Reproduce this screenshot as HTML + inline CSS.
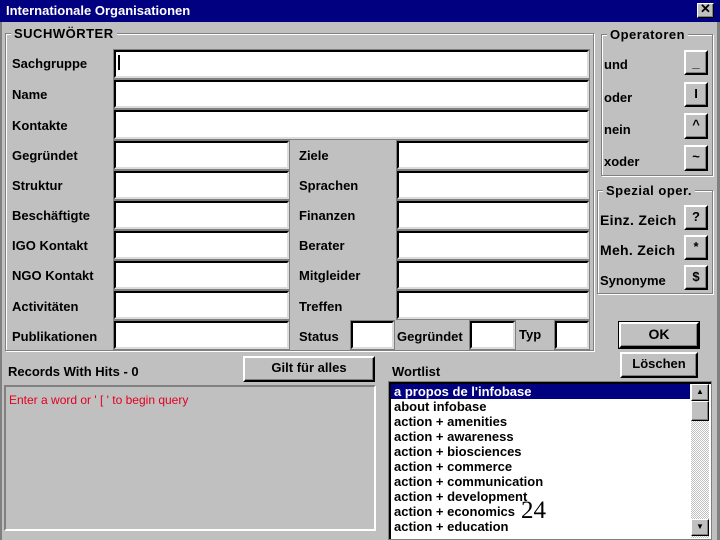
<!DOCTYPE html>
<html><head><meta charset="utf-8"><style>
*{margin:0;padding:0;box-sizing:border-box}
body{width:720px;height:540px;background:#c0c0c0;position:relative;overflow:hidden;font-family:"Liberation Sans",sans-serif;font-weight:bold;font-size:13px;color:#000}
.a{position:absolute}
.f{position:absolute;background:#fff;border-top:2px solid #000;border-left:2px solid #000;border-right:2px solid #dcdcdc;border-bottom:2px solid #dcdcdc;outline:1px solid #808080}
.l{position:absolute;font-size:13px;line-height:15px;white-space:nowrap}
.g{position:absolute;border:1px solid #808080;box-shadow:1px 1px 0 #fff, inset 1px 1px 0 #fff}
.gt{position:absolute;background:#c0c0c0;padding:0 3px;font-size:13px;line-height:15px;letter-spacing:0.5px}
.b{position:absolute;background:#c0c0c0;border-top:2px solid #fff;border-left:2px solid #fff;border-right:2px solid #000;border-bottom:2px solid #000;box-shadow:inset -1px -1px 0 #808080;text-align:center;font-size:13px}
.li{height:15px;line-height:15px;padding-left:3px;font-size:13px;white-space:nowrap}
</style></head><body>
<div class="a" style="left:0;top:0;width:720px;height:22px;background:#000080;color:#fff;font-size:13px;line-height:22px;padding-left:6px">Internationale Organisationen</div>
<div class="b" style="left:697px;top:3px;width:17px;height:15px;line-height:10px;font-size:13px;border-width:1px">✕</div>
<div class="a" style="left:0;top:22px;width:2px;height:518px;background:#808080"></div>
<div class="a" style="left:717px;top:22px;width:3px;height:518px;background:#808080"></div>

<div class="g" style="left:5px;top:33px;width:589px;height:318px"></div>
<div class="gt" style="left:11px;top:26px">SUCHWÖRTER</div>
<div class="g" style="left:601px;top:34px;width:112px;height:142px"></div>
<div class="gt" style="left:607px;top:27px">Operatoren</div>
<div class="g" style="left:597px;top:190px;width:116px;height:104px"></div>
<div class="gt" style="left:603px;top:183px">Spezial oper.</div>

<div class="l" style="left:12px;top:56px">Sachgruppe</div>
<div class="l" style="left:12px;top:87px">Name</div>
<div class="l" style="left:12px;top:118px">Kontakte</div>
<div class="f" style="left:114px;top:50px;width:475px;height:28px"><div class="a" style="left:2px;top:3px;width:2px;height:15px;background:#000"></div></div>
<div class="f" style="left:114px;top:80px;width:475px;height:28px"></div>
<div class="f" style="left:114px;top:110px;width:475px;height:29px"></div>

<div class="l" style="left:12px;top:148px">Gegründet</div>
<div class="l" style="left:12px;top:178px">Struktur</div>
<div class="l" style="left:12px;top:208px">Beschäftigte</div>
<div class="l" style="left:12px;top:238px">IGO Kontakt</div>
<div class="l" style="left:12px;top:268px">NGO Kontakt</div>
<div class="l" style="left:12px;top:299px">Activitäten</div>
<div class="l" style="left:12px;top:329px">Publikationen</div>
<div class="f" style="left:114px;top:141px;width:175px;height:28px"></div>
<div class="f" style="left:114px;top:171px;width:175px;height:28px"></div>
<div class="f" style="left:114px;top:201px;width:175px;height:28px"></div>
<div class="f" style="left:114px;top:231px;width:175px;height:28px"></div>
<div class="f" style="left:114px;top:261px;width:175px;height:28px"></div>
<div class="f" style="left:114px;top:291px;width:175px;height:28px"></div>
<div class="f" style="left:114px;top:321px;width:175px;height:28px"></div>

<div class="l" style="left:299px;top:148px">Ziele</div>
<div class="l" style="left:299px;top:178px">Sprachen</div>
<div class="l" style="left:299px;top:208px">Finanzen</div>
<div class="l" style="left:299px;top:238px">Berater</div>
<div class="l" style="left:299px;top:268px">Mitgleider</div>
<div class="l" style="left:299px;top:299px">Treffen</div>
<div class="l" style="left:299px;top:329px">Status</div>
<div class="f" style="left:397px;top:141px;width:192px;height:28px"></div>
<div class="f" style="left:397px;top:171px;width:192px;height:28px"></div>
<div class="f" style="left:397px;top:201px;width:192px;height:28px"></div>
<div class="f" style="left:397px;top:231px;width:192px;height:28px"></div>
<div class="f" style="left:397px;top:261px;width:192px;height:28px"></div>
<div class="f" style="left:397px;top:291px;width:192px;height:28px"></div>
<div class="f" style="left:351px;top:321px;width:43px;height:28px"></div>
<div class="l" style="left:397px;top:329px">Gegründet</div>
<div class="f" style="left:470px;top:321px;width:45px;height:28px"></div>
<div class="l" style="left:519px;top:327px">Typ</div>
<div class="f" style="left:555px;top:321px;width:34px;height:28px"></div>

<div class="l" style="left:604px;top:57px">und</div>
<div class="l" style="left:604px;top:90px">oder</div>
<div class="l" style="left:604px;top:122px">nein</div>
<div class="l" style="left:604px;top:154px">xoder</div>
<div class="b" style="left:684px;top:50px;width:24px;height:25px;line-height:21px">_</div>
<div class="b" style="left:684px;top:82px;width:24px;height:25px;line-height:19px">I</div>
<div class="b" style="left:684px;top:113px;width:24px;height:26px;line-height:19px">^</div>
<div class="b" style="left:684px;top:145px;width:24px;height:26px;line-height:19px">~</div>

<div class="l" style="left:600px;top:213px;font-size:14px;letter-spacing:0.3px">Einz. Zeich</div>
<div class="l" style="left:600px;top:243px;font-size:14px;letter-spacing:0.3px">Meh. Zeich</div>
<div class="l" style="left:600px;top:273px;font-size:13px">Synonyme</div>
<div class="b" style="left:684px;top:205px;width:24px;height:25px;line-height:19px">?</div>
<div class="b" style="left:684px;top:235px;width:24px;height:25px;line-height:19px">*</div>
<div class="b" style="left:684px;top:265px;width:24px;height:25px;line-height:19px">$</div>

<div class="b" style="left:619px;top:322px;width:80px;height:26px;line-height:20px;outline:1px solid #000;font-size:14px">OK</div>
<div class="b" style="left:620px;top:352px;width:78px;height:26px;line-height:20px">Löschen</div>
<div class="b" style="left:243px;top:356px;width:132px;height:26px;line-height:20px">Gilt für alles</div>

<div class="l" style="left:8px;top:364px">Records With Hits - 0</div>
<div class="a" style="left:4px;top:385px;width:372px;height:146px;border-top:2px solid #808080;border-left:2px solid #808080;border-right:2px solid #fff;border-bottom:2px solid #fff"></div>
<div class="l" style="left:9px;top:393px;color:#e00020;font-weight:normal;font-size:12px">Enter a word or ' [ ' to begin query</div>

<div class="l" style="left:392px;top:364px">Wortlist</div>
<div class="a" style="left:389px;top:382px;width:322px;height:157px;background:#fff;border-top:2px solid #000;border-left:2px solid #000;outline:1px solid #808080">
 <div class="li" style="background:#000080;color:#fff;width:299px">a propos de l'infobase</div>
 <div class="li">about infobase</div>
 <div class="li">action + amenities</div>
 <div class="li">action + awareness</div>
 <div class="li">action + biosciences</div>
 <div class="li">action + commerce</div>
 <div class="li">action + communication</div>
 <div class="li">action + development</div>
 <div class="li">action + economics</div>
 <div class="li">action + education</div>
</div>
<div class="a" style="left:691px;top:384px;width:18px;height:154px;background:repeating-conic-gradient(#c0c0c0 0 25%,#fff 0 50%) 0 0/2px 2px"></div>
<div class="b" style="left:691px;top:384px;width:18px;height:17px;border-width:1px;font-size:8px;line-height:14px">▲</div>
<div class="b" style="left:691px;top:401px;width:18px;height:20px;border-width:1px"></div>
<div class="b" style="left:691px;top:519px;width:18px;height:17px;border-width:1px;font-size:8px;line-height:14px">▼</div>
<div class="a" style="left:521px;top:497px;font-family:'Liberation Serif',serif;font-weight:normal;font-size:25px;line-height:28px">24</div>
</body></html>
